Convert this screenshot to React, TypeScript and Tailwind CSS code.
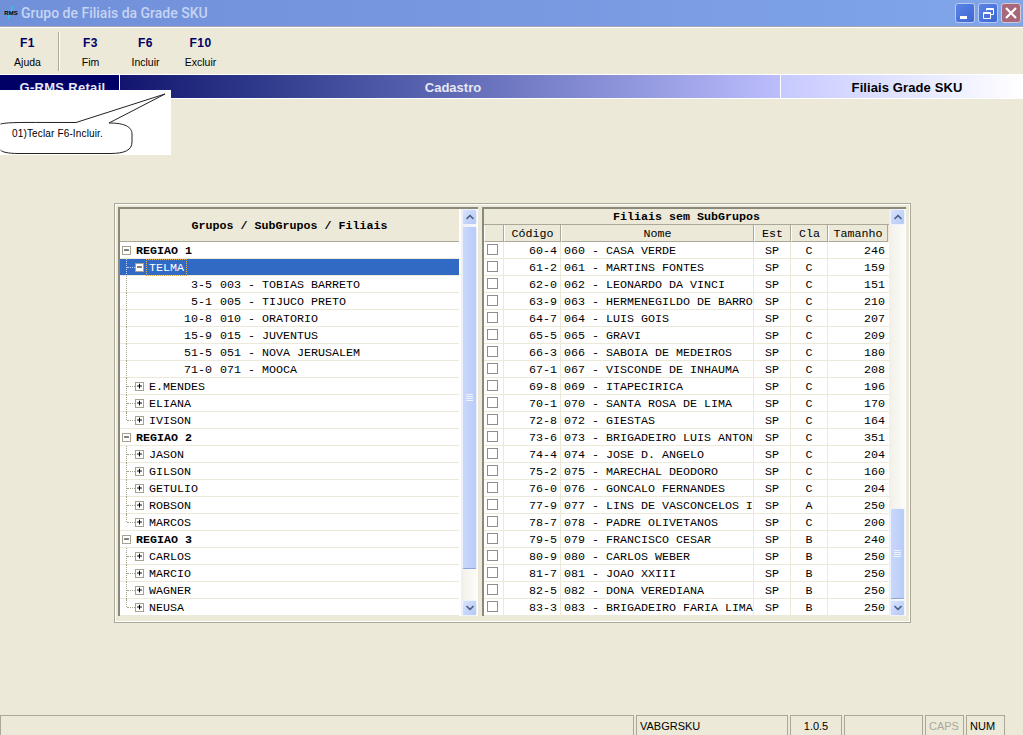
import type { ReactNode } from "react";
import { ChevronDown, ChevronUp, Minus, Plus } from "lucide-react";

const mono = "font-['Liberation_Mono','Courier_New',monospace]";
const ui = "font-['Liberation_Sans',Arial,sans-serif]";

const tools = [
  { key: "F3", label: "Fim" },
  { key: "F6", label: "Incluir" },
  { key: "F10", label: "Excluir" },
];

type TreeRow = { level: 0 | 1 | 2; text: string; code?: string; open?: boolean; selected?: boolean; last?: boolean };

const tree: TreeRow[] = [
  { level: 0, text: "REGIAO 1", open: true },
  { level: 1, text: "TELMA", open: true, selected: true },
  { level: 2, code: "3-5", text: "003 - TOBIAS BARRETO" },
  { level: 2, code: "5-1", text: "005 - TIJUCO PRETO" },
  { level: 2, code: "10-8", text: "010 - ORATORIO" },
  { level: 2, code: "15-9", text: "015 - JUVENTUS" },
  { level: 2, code: "51-5", text: "051 - NOVA JERUSALEM" },
  { level: 2, code: "71-0", text: "071 - MOOCA" },
  { level: 1, text: "E.MENDES" },
  { level: 1, text: "ELIANA" },
  { level: 1, text: "IVISON", last: true },
  { level: 0, text: "REGIAO 2", open: true },
  { level: 1, text: "JASON" },
  { level: 1, text: "GILSON" },
  { level: 1, text: "GETULIO" },
  { level: 1, text: "ROBSON" },
  { level: 1, text: "MARCOS", last: true },
  { level: 0, text: "REGIAO 3", open: true },
  { level: 1, text: "CARLOS" },
  { level: 1, text: "MARCIO" },
  { level: 1, text: "WAGNER" },
  { level: 1, text: "NEUSA", last: true },
];

const filiais = [
  ["60-4", "060 - CASA VERDE", "C", "246"],
  ["61-2", "061 - MARTINS FONTES", "C", "159"],
  ["62-0", "062 - LEONARDO DA VINCI", "C", "151"],
  ["63-9", "063 - HERMENEGILDO DE BARRO", "C", "210"],
  ["64-7", "064 - LUIS GOIS", "C", "207"],
  ["65-5", "065 - GRAVI", "C", "209"],
  ["66-3", "066 - SABOIA DE MEDEIROS", "C", "180"],
  ["67-1", "067 - VISCONDE DE INHAUMA", "C", "208"],
  ["69-8", "069 - ITAPECIRICA", "C", "196"],
  ["70-1", "070 - SANTA ROSA DE LIMA", "C", "170"],
  ["72-8", "072 - GIESTAS", "C", "164"],
  ["73-6", "073 - BRIGADEIRO LUIS ANTON", "C", "351"],
  ["74-4", "074 - JOSE D. ANGELO", "C", "204"],
  ["75-2", "075 - MARECHAL DEODORO", "C", "160"],
  ["76-0", "076 - GONCALO FERNANDES", "C", "204"],
  ["77-9", "077 - LINS DE VASCONCELOS I", "A", "250"],
  ["78-7", "078 - PADRE OLIVETANOS", "C", "200"],
  ["79-5", "079 - FRANCISCO CESAR", "B", "240"],
  ["80-9", "080 - CARLOS WEBER", "B", "250"],
  ["81-7", "081 - JOAO XXIII", "B", "250"],
  ["82-5", "082 - DONA VEREDIANA", "B", "250"],
  ["83-3", "083 - BRIGADEIRO FARIA LIMA", "B", "250"],
];

function ScrollButton({ down }: { down?: boolean }) {
  const Icon = down ? ChevronDown : ChevronUp;
  return (
    <div className="flex h-[16px] w-[15px] shrink-0 items-center justify-center rounded-[2px] border border-[#eef2fd] bg-gradient-to-br from-[#d8e3fd] to-[#b4c8f5] text-[#4d6185]">
      <Icon size={12} strokeWidth={3.5} />
    </div>
  );
}

function Scrollbar({ before, thumb }: { before: number; thumb: number }) {
  return (
    <div className="flex h-full w-[17px] shrink-0 flex-col bg-gradient-to-r from-[#f1efe7] to-[#fdfdfa] pl-[1px]">
      <ScrollButton />
      <div className="flex-1">
        <div style={{ height: before }} />
        <div
          style={{ height: thumb }}
          className="flex w-[15px] items-center justify-center rounded-[2px] border border-[#eef2fd] border-b-[#8ea5d8] bg-gradient-to-r from-[#c9d8fb] to-[#b9cbf8]"
        >
          <div className="flex w-[7px] flex-col gap-[1px]">
            <span className="h-px bg-[#eef3fe]" />
            <span className="h-px bg-[#eef3fe]" />
            <span className="h-px bg-[#eef3fe]" />
            <span className="h-px bg-[#eef3fe]" />
          </div>
        </div>
      </div>
      <ScrollButton down />
    </div>
  );
}

function Expander({ open }: { open?: boolean }) {
  const Icon = open ? Minus : Plus;
  return (
    <span className="flex h-[9px] w-[9px] shrink-0 items-center justify-center border border-[#a5a292] bg-white text-black">
      <Icon size={8} strokeWidth={3.5} />
    </span>
  );
}

function TreeLine({ row }: { row: TreeRow }) {
  if (row.level === 0) {
    return (
      <div className="flex h-[17px] items-center border-b border-[#ece9d8] pl-[2px] font-bold text-black">
        <Expander open={row.open} />
        <span className="ml-[5px] pt-[2px] leading-[14px]">{row.text}</span>
      </div>
    );
  }
  if (row.level === 2) {
    return (
      <div className="relative flex h-[17px] items-center border-b border-[#ece9d8] text-black">
        <span className="absolute top-0 left-[6px] h-[17px] border-l border-dotted border-[#a5a292]" />
        <span className="w-[92px] pt-[2px] text-right leading-[14px]">{row.code}</span>
        <span className="ml-[8px] pt-[2px] leading-[14px] whitespace-pre">{row.text}</span>
      </div>
    );
  }
  return (
    <div
      className={`relative flex h-[17px] items-center border-b border-[#ece9d8] pl-[15px] ${
        row.selected ? "bg-[#316ac5] text-white" : "text-black"
      }`}
    >
      <span
        className={`absolute top-0 left-[6px] border-l border-dotted ${row.last ? "h-[8px]" : "h-[17px]"} ${
          row.selected ? "border-[#c7d6f0]" : "border-[#a5a292]"
        }`}
      />
      <span
        className={`absolute top-[8px] left-[7px] w-[8px] border-t border-dotted ${
          row.selected ? "border-[#c7d6f0]" : "border-[#a5a292]"
        }`}
      />
      <Expander open={row.open} />
      <span
        className={`ml-[3px] px-[2px] leading-[14px] ${
          row.selected ? "pt-px outline-1 outline-dotted outline-[#e0b050]" : "pt-[2px]"
        }`}
      >
        {row.text}
      </span>
    </div>
  );
}

function HeaderCell({ className, children }: { className?: string; children?: ReactNode }) {
  return (
    <div
      className={`flex h-full shrink-0 items-center justify-center border-r border-b border-l border-r-[#aca899] border-b-[#aca899] border-l-white pt-[3px] ${className ?? ""}`}
    >
      {children}
    </div>
  );
}

function StatusPanel({ className, children }: { className?: string; children?: ReactNode }) {
  return (
    <div
      className={`flex h-[20px] shrink-0 items-center border-t border-r border-l border-[#aca899] px-[3px] pt-[1px] text-[11px] ${className ?? ""}`}
    >
      {children}
    </div>
  );
}

export default function App() {
  return (
    <div className={`relative flex h-[735px] w-[1023px] flex-col overflow-hidden bg-[#ece9d8] ${ui}`}>
      {/* barra de titulo */}
      <div className="flex h-[27px] shrink-0 items-center justify-between border-b border-[#a9a6b0] bg-gradient-to-r from-[#7090da] via-[#7898e0] to-[#80a6e9] pr-[2px] pl-[2px]">
        <div className="flex items-center">
          <div className="relative flex h-[16px] w-[18px] items-center justify-center text-[6px] leading-none font-bold text-black">
            <svg width="18" height="16" viewBox="0 0 18 16" fill="none" className="absolute inset-0">
              <path d="M11 1L6 14" stroke="#2fc8e8" strokeWidth="1.5" />
            </svg>
            <span className="relative">RMS</span>
          </div>
          <span className="ml-[1px] font-['Roboto',sans-serif] text-[14px] font-medium text-[#c6d4f3]">
            Grupo de Filiais da Grade SKU
          </span>
        </div>
        <div className="flex items-center gap-[3px]">
          <div className="flex h-[20px] w-[20px] items-end justify-start rounded-[3px] border border-[#b9caf2] bg-gradient-to-br from-[#5a84e4] to-[#3e66d4] pb-[3px] pl-[4px]">
            <span className="h-[3px] w-[7px] bg-white" />
          </div>
          <div className="flex h-[20px] w-[20px] items-center justify-center rounded-[3px] border border-[#b9caf2] bg-gradient-to-br from-[#5a84e4] to-[#3e66d4]">
            <svg width="11" height="11" viewBox="0 0 11 11" fill="none" stroke="#fff">
              <path d="M3.5 2.5V.5h7v6H8" />
              <path d="M3.5 1.5h7" />
              <path d="M.5 4.5h7v6h-7z" />
              <path d="M.5 5.5h7" />
            </svg>
          </div>
          <div className="flex h-[20px] w-[20px] items-center justify-center rounded-[3px] border border-[#d8c8d0] bg-[#a8687c]">
            <svg width="12" height="12" viewBox="0 0 12 12" fill="none" stroke="#fff" strokeWidth="2.2">
              <path d="M1 1L11 11M11 1L1 11" />
            </svg>
          </div>
        </div>
      </div>

      {/* barra de ferramentas */}
      <div className="flex h-[47px] shrink-0 items-center border-t border-white">
        <div className="flex h-full w-[55px] flex-col items-center pt-[8px]">
          <span className="text-[12px] leading-[14px] font-bold tracking-[0.5px] text-[#000066]">F1</span>
          <span className="mt-[5px] text-[10.5px] leading-[14px] text-black">Ajuda</span>
        </div>
        <div className="mx-[3px] h-[39px] w-[2px] border-r border-l border-r-white border-l-[#aca899]" />
        {tools.map((t) => (
          <div key={t.key} className="flex h-full w-[55px] flex-col items-center pt-[8px]">
            <span className="text-[12px] leading-[14px] font-bold tracking-[0.5px] text-[#000066]">{t.key}</span>
            <span className="mt-[5px] text-[10.5px] leading-[14px] text-black">{t.label}</span>
          </div>
        ))}
      </div>

      {/* faixa */}
      <div className="flex h-[25px] shrink-0 border-y border-white text-[13px] font-bold">
        <div className="flex w-[120px] items-center justify-center border-r border-white bg-[#000066] pt-[3px] pl-[6px] tracking-[0.3px] text-[#e8e8f4]">
          G-RMS Retail
        </div>
        <div className="flex w-[660px] items-center justify-center bg-gradient-to-r from-[#14146e] to-[#bcbdfd] pt-[3px] pl-[6px] text-[#e8e8f4]">
          Cadastro
        </div>
        <div className="flex flex-1 items-center justify-center border-l border-white bg-gradient-to-r from-[#c6c9fe] to-white pt-[3px] pl-[10px] tracking-[0.1px] text-black">
          Filiais Grade SKU
        </div>
      </div>

      {/* painel */}
      <div className="flex-1 pt-[104px] pl-[114px]">
        <div className="h-[420px] w-[797px] border border-[#aca899]">
          <div className={`flex h-full border border-white p-[2px] text-[11.67px] text-black ${mono}`}>
            <div className="flex h-[409px] w-[360px] border-t-2 border-l-2 border-t-[#8a887a] border-l-[#8a887a]">
              <div className="flex w-[341px] flex-col bg-white pr-[2px]">
                <div className="flex h-[33px] shrink-0 items-center justify-center border-b border-[#aca899] bg-[#ece9d8] pt-[3px] font-bold">
                  Grupos / SubGrupos / Filiais
                </div>
                {tree.map((row, i) => (
                  <TreeLine key={i} row={row} />
                ))}
              </div>
              <Scrollbar before={1} thumb={343} />
            </div>
            <div className="ml-[4px] flex h-[409px] w-[424px] border-t-2 border-l-2 border-t-[#8a887a] border-l-[#8a887a]">
              <div className="flex w-[405px] flex-col bg-white">
                <div className="flex h-[16px] shrink-0 items-center justify-center border-b border-[#aca899] bg-[#ece9d8] pt-[3px] font-bold">
                  Filiais sem SubGrupos
                </div>
                <div className="flex h-[17px] shrink-0 bg-[#ece9d8]">
                  <HeaderCell className="w-[20px]" />
                  <HeaderCell className="w-[57px]">Código</HeaderCell>
                  <HeaderCell className="w-[193px]">Nome</HeaderCell>
                  <HeaderCell className="w-[37px]">Est</HeaderCell>
                  <HeaderCell className="w-[37px]">Cla</HeaderCell>
                  <HeaderCell className="w-[60px]">Tamanho</HeaderCell>
                </div>
                {filiais.map((f) => (
                  <div key={f[0]} className="flex h-[17px] shrink-0 border-b border-[#ece9d8] leading-[16px]">
                    <div className="w-[20px] border-r border-[#ece9d8] pt-[2px] pl-[3px]">
                      <div className="h-[11px] w-[11px] border border-[#8e8e8e] bg-white" />
                    </div>
                    <div className="w-[57px] border-r border-[#ece9d8] pt-[1px] pr-[3px] text-right">{f[0]}</div>
                    <div className="w-[193px] border-r border-[#ece9d8] pt-[1px] pl-[3px] whitespace-pre">{f[1]}</div>
                    <div className="w-[37px] border-r border-[#ece9d8] pt-[1px] text-center">SP</div>
                    <div className="w-[37px] border-r border-[#ece9d8] pt-[1px] text-center">{f[2]}</div>
                    <div className="w-[60px] pt-[1px] pr-[3px] text-right">{f[3]}</div>
                  </div>
                ))}
              </div>
              <Scrollbar before={283} thumb={91} />
            </div>
          </div>
        </div>
      </div>

      {/* barra de status */}
      <div className="flex h-[20px] shrink-0 gap-[2px] text-black">
        <StatusPanel className="w-[634px]" />
        <StatusPanel className="w-[152px]">VABGRSKU</StatusPanel>
        <StatusPanel className="w-[52px] justify-center">1.0.5</StatusPanel>
        <StatusPanel className="w-[79px]" />
        <StatusPanel className="w-[39px] text-[#aca899]">CAPS</StatusPanel>
        <StatusPanel className="w-[39px]">NUM</StatusPanel>
      </div>

      {/* balao de ajuda sobre a tela */}
      <div className="absolute top-[90px] left-0 h-[65px] w-[171px] bg-white">
        <svg width="171" height="65" viewBox="0 0 171 65" fill="none" className="absolute inset-0">
          <path
            d="M0.5 34C10 32 20 32.5 76 32.5L165 4L109 33C125 33 132 37 132 44V52C132 60 125 63.5 110 63.5H18C8 63.5 2 62 0.5 60"
            stroke="#222"
            strokeWidth="1"
          />
        </svg>
        <span className="absolute top-[37px] left-[12px] text-[10px] leading-[14px] tracking-[0.15px] text-black">
          01)Teclar F6-Incluir.
        </span>
      </div>
    </div>
  );
}
